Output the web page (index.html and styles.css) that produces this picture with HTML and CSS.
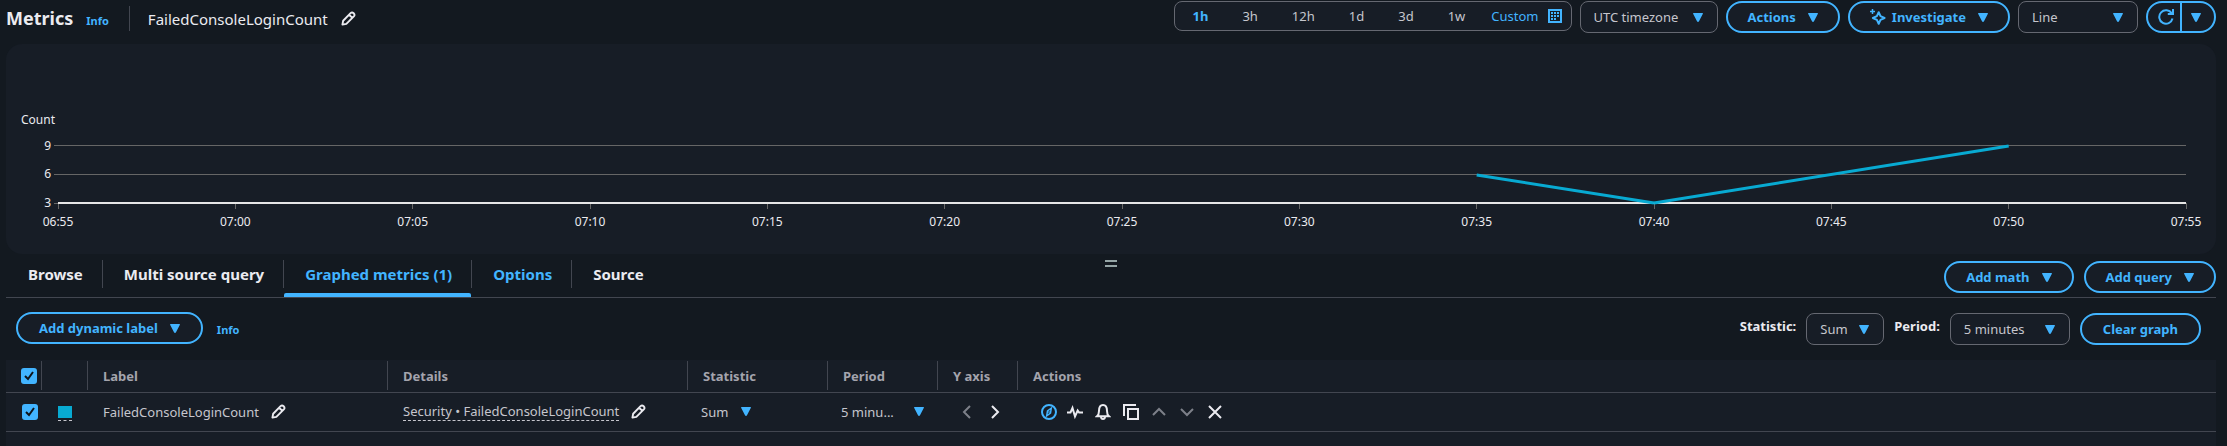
FILE: index.html
```html
<!DOCTYPE html>
<html lang="en">
<head>
<meta charset="utf-8">
<title>Metrics</title>
<link rel="stylesheet" href="styles.css">
</head>
<body>
<svg class="defs" aria-hidden="true">
  <symbol id="caret" viewBox="0 0 10 9"><path d="M.6 0h8.8c.5 0 .7.4.5.8L6 8.300c-.4.8-1.600.8-2 0L.1.8C-.1.4.1 0 .6 0Z" fill="currentColor"/></symbol>
  <symbol id="pencil" viewBox="0 0 16 16"><path d="M1.500 14.500 2.300 10.400 10.200 2.300Q11.800.8 13.500 2.400Q15.200 4.100 13.700 5.800L5.700 13.700Z M8.700 4 12.100 7.300" fill="none" stroke="currentColor" stroke-width="2" stroke-linejoin="round"/></symbol>
</svg>

<header class="topbar">
  <h1>Metrics</h1>
  <a class="info" href="#">Info</a>
  <div class="graph-name">
    <span>FailedConsoleLoginCount</span>
    <button class="icon-btn" aria-label="Edit name"><svg class="pencil"><use href="#pencil"/></svg></button>
  </div>
  <div class="toolbar">
    <div class="range" role="group" aria-label="Time range">
      <button class="active">1h</button><button>3h</button><button>12h</button><button>1d</button><button>3d</button><button>1w</button>
      <button class="custom">Custom
        <svg width="14" height="14" viewBox="0 0 14 14"><path d="M1 1h12v12H1z" fill="none" stroke="currentColor" stroke-width="2"/><path d="M3 4h2M6 4h2M9 4h2M3 7h2M6 7h2M9 7h2M3 10h2M6 10h2" stroke="currentColor" stroke-width="2"/></svg>
      </button>
    </div>
    <div class="select tz"><select aria-label="Timezone"><option>UTC timezone</option></select><svg class="caret"><use href="#caret"/></svg></div>
    <button class="btn">Actions <svg class="caret"><use href="#caret"/></svg></button>
    <button class="btn"><svg class="spark" viewBox="0 0 16 16" fill="none" stroke="currentColor"><path d="M8.700 3.200 10.500 7.200 14.500 9 10.500 10.800 8.700 14.800 6.900 10.800 2.900 9 6.900 7.200Z" stroke-width="2" stroke-linejoin="round"/><path d="M2.500 0v5M0 2.500h5" stroke-width="1.500"/></svg><span>Investigate</span> <svg class="caret"><use href="#caret"/></svg></button>
    <div class="select graph-type"><select aria-label="Graph type"><option>Line</option></select><svg class="caret"><use href="#caret"/></svg></div>
    <div class="split">
      <button aria-label="Refresh"><svg width="16" height="16" viewBox="0 0 16 16" fill="none" stroke="currentColor" stroke-width="2"><path d="M14.500 9.500A6.700 6.700 0 1 1 13.700 4.500"/><path d="M15 0v5H9.800"/></svg></button>
      <button aria-label="Refresh options"><svg class="caret"><use href="#caret"/></svg></button>
    </div>
  </div>
</header>

<main>
  <section class="chart-panel" aria-label="Graph">
    <p class="unit">Count</p>
    <svg class="chart" role="img" aria-label="Line graph of FailedConsoleLoginCount">
      <g class="grid">
        <path d="M-4 62.500H0"/>
        <line x1="-4" x2="100%" y1="4.500" y2="4.500"/>
        <line x1="-4" x2="100%" y1="33.500" y2="33.500"/>
        <line x1="0" x2="0" y1="62" y2="68"/><line x1="8.333%" x2="8.333%" y1="62" y2="68"/><line x1="16.667%" x2="16.667%" y1="62" y2="68"/><line x1="25%" x2="25%" y1="62" y2="68"/><line x1="33.333%" x2="33.333%" y1="62" y2="68"/><line x1="41.667%" x2="41.667%" y1="62" y2="68"/><line x1="50%" x2="50%" y1="62" y2="68"/><line x1="58.333%" x2="58.333%" y1="62" y2="68"/><line x1="66.667%" x2="66.667%" y1="62" y2="68"/><line x1="75%" x2="75%" y1="62" y2="68"/><line x1="83.333%" x2="83.333%" y1="62" y2="68"/><line x1="91.667%" x2="91.667%" y1="62" y2="68"/><line x1="100%" x2="100%" y1="62" y2="68"/>
      </g>
      <line class="axis" x1="0" x2="100%" y1="62" y2="62"/>
      <g class="y-labels"><text x="-7" y="9">9</text><text x="-7" y="37">6</text><text x="-7" y="66">3</text></g>
      <g class="x-labels">
        <text x="0" y="85">06:55</text><text x="8.333%" y="85">07:00</text><text x="16.667%" y="85">07:05</text><text x="25%" y="85">07:10</text><text x="33.333%" y="85">07:15</text><text x="41.667%" y="85">07:20</text><text x="50%" y="85">07:25</text><text x="58.333%" y="85">07:30</text><text x="66.667%" y="85">07:35</text><text x="75%" y="85">07:40</text><text x="83.333%" y="85">07:45</text><text x="91.667%" y="85">07:50</text><text x="100%" y="85">07:55</text>
      </g>
      <g class="series">
        <line x1="66.667%" y1="34" x2="75%" y2="62"/>
        <line x1="75%" y1="62" x2="91.667%" y2="5"/>
      </g>
    </svg>
  </section>

  <div class="tabbar">
    <nav class="tabs">
      <a href="#">Browse</a><a href="#">Multi source query</a><a href="#" class="current">Graphed metrics (1)</a><a href="#" class="accent">Options</a><a href="#">Source</a>
    </nav>
    <button class="handle" aria-label="Resize panels"></button>
    <div class="tab-actions">
      <button class="btn">Add math <svg class="caret"><use href="#caret"/></svg></button>
      <button class="btn">Add query <svg class="caret"><use href="#caret"/></svg></button>
    </div>
  </div>

  <div class="controls">
    <button class="btn">Add dynamic label <svg class="caret"><use href="#caret"/></svg></button>
    <a class="info" href="#">Info</a>
    <div class="filters">
      <label for="stat">Statistic:</label>
      <div class="select stat"><select id="stat"><option>Sum</option></select><svg class="caret"><use href="#caret"/></svg></div>
      <label for="period">Period:</label>
      <div class="select period"><select id="period"><option>5 minutes</option></select><svg class="caret"><use href="#caret"/></svg></div>
      <button class="btn">Clear graph</button>
    </div>
  </div>

  <div class="table-wrap">
  <table>
    <colgroup><col class="c-check"><col class="c-color"><col class="c-label"><col class="c-details"><col class="c-stat"><col class="c-period"><col class="c-axis"><col></colgroup>
    <thead>
      <tr><th><input type="checkbox" checked aria-label="Select all metrics"></th><th></th><th>Label</th><th>Details</th><th>Statistic</th><th>Period</th><th>Y axis</th><th>Actions</th></tr>
    </thead>
    <tbody>
      <tr>
        <td class="check"><input type="checkbox" checked aria-label="Select FailedConsoleLoginCount"></td>
        <td class="color"><button class="swatch" aria-label="Line color"></button></td>
        <td><div class="cell">FailedConsoleLoginCount <button class="icon-btn" aria-label="Edit label"><svg class="pencil"><use href="#pencil"/></svg></button></div></td>
        <td><div class="cell"><span class="details">Security • FailedConsoleLoginCount</span> <button class="icon-btn" aria-label="Edit details"><svg class="pencil"><use href="#pencil"/></svg></button></div></td>
        <td class="pick"><div class="select plain row-stat"><select aria-label="Statistic"><option>Sum</option></select><svg class="caret"><use href="#caret"/></svg></div></td>
        <td class="pick"><div class="select plain row-period"><select aria-label="Period"><option>5 minu...</option></select><svg class="caret"><use href="#caret"/></svg></div></td>
        <td><div class="cell axis-btns">
          <button class="icon-btn dim" aria-label="Left Y axis"><svg viewBox="0 0 16 16"><path d="M11 2 5 8l6 6"/></svg></button>
          <button class="icon-btn" aria-label="Right Y axis"><svg viewBox="0 0 16 16"><path d="m5 2 6 6-6 6"/></svg></button>
        </div></td>
        <td><div class="cell row-actions">
          <button class="icon-btn blue" aria-label="Explore"><svg viewBox="0 0 16 16"><circle cx="8" cy="8" r="7"/><path d="M10.300 4.200 9.500 9 5.700 11.800 6.500 7Z" stroke-width="1.500"/><circle cx="8" cy="8" r=".5" stroke-width="1"/></svg></button>
          <button class="icon-btn pulse" aria-label="Anomaly detection"><svg viewBox="0 0 16 16"><path d="M0 8.500h3.500l2-4.500 2.500 8.500 2.700-6 1.400 2H16"/></svg></button>
          <button class="icon-btn" aria-label="Create alarm"><svg viewBox="0 0 16 16"><path d="M2 12.300c1.500-1.300 2-2.800 2-5.300 0-3.700 1.300-6 4-6s4 2.300 4 6c0 2.500.5 4 2 5.300ZM6 13c.2 2.600 3.800 2.600 4 0"/></svg></button>
          <button class="icon-btn" aria-label="Duplicate"><svg viewBox="0 0 16 16"><path d="M1 12V1h12M5 5h10v10H5z"/></svg></button>
          <button class="icon-btn dim" aria-label="Move up"><svg viewBox="0 0 16 16"><path d="m2 11 6-6 6 6"/></svg></button>
          <button class="icon-btn dim" aria-label="Move down"><svg viewBox="0 0 16 16"><path d="m2 5 6 6 6-6"/></svg></button>
          <button class="icon-btn" aria-label="Remove"><svg viewBox="0 0 16 16"><path d="m2 2 12 12M14 2 2 14"/></svg></button>
        </div></td>
      </tr>
    </tbody>
  </table>
  </div>
</main>
</body>
</html>
```
FILE: styles.css
```css
:root {
  --bg: #131920;
  --panel: #171d26;
  --line: #424650;
  --border: #656871;
  --blue: #42b4ff;
  --text: #c6c6cd;
  --bright: #ebebf0;
}
* { box-sizing: border-box; }
html, body { min-height: 100%; }
html { background: var(--bg); }
body {
  display: flex;
  flex-direction: column;
  min-height: 100vh;
  margin: 0;
  padding: 0 11px 0 6px;
  background: var(--bg);
  color: var(--text);
  font: 13px/20px "Noto Sans", "Open Sans", sans-serif;
}
main { display: flex; flex: 1; flex-direction: column; }
.defs { position: absolute; width: 0; height: 0; }
button, select { font: inherit; color: inherit; }
button { background: none; border: 0; padding: 0; }
a { color: var(--blue); text-decoration: none; }

.topbar { display: flex; align-items: flex-start; height: 44px; padding-top: 1px; }
.topbar h1 { margin: 0 13px 0 0; color: var(--bright); font-size: 18px; line-height: 34px; }
.info { font-size: 11px; font-weight: 700; }
.topbar .info { line-height: 40px; }
.graph-name {
  display: flex;
  align-items: center;
  gap: 13px;
  height: 25px;
  margin: 5px 0 0 20px;
  padding-left: 18px;
  border-left: 1px solid var(--line);
  color: var(--bright);
  font-size: 15px;
}
.icon-btn { display: flex; color: var(--bright); }
.icon-btn svg { width: 16px; height: 16px; fill: none; stroke: currentColor; stroke-width: 2; }
.icon-btn .pencil { width: 15px; height: 15px; stroke: none; }
.caret { flex: none; width: 10px; height: 9px; color: var(--blue); }

.toolbar { display: flex; gap: 8px; margin-left: auto; }
.range {
  display: flex;
  height: 30px;
  border: 1px solid var(--border);
  border-radius: 8px;
  background: var(--panel);
}
.range button { padding: 0 17px; }
.range .active { color: var(--blue); font-weight: 700; }
.range .custom { display: flex; align-items: center; gap: 9px; padding: 0 9px; color: var(--blue); }

.btn {
  display: flex;
  align-items: center;
  gap: 12px;
  height: 32px;
  padding: 0 20px;
  border: 2px solid var(--blue);
  border-radius: 16px;
  background: var(--panel);
  color: var(--blue);
  font-weight: 700;
  white-space: nowrap;
}
.spark { width: 16px; height: 16px; }
.btn .spark + span { margin-left: -6px; }
.controls .btn { padding: 0 21px; }

.select { display: grid; align-items: center; }
.select > * { grid-area: 1 / 1; }
.select .caret { justify-self: end; margin-right: 15px; pointer-events: none; }
select {
  appearance: none;
  width: 100%;
  height: 32px;
  padding: 0 28px 0 13px;
  border: 1px solid var(--border);
  border-radius: 8px;
  background: var(--panel);
}
.tz { width: 138px; }
.graph-type { width: 120px; }
.stat { width: 78px; }
.period { width: 120px; }

.split { display: flex; width: 70px; height: 32px; border: 2px solid var(--blue); border-radius: 16px; background: var(--panel); color: var(--blue); }
.split button { display: flex; flex: 1; align-items: center; justify-content: center; }
.split button + button { border-left: 2px solid var(--blue); padding-right: 4px; }
.split button:first-child { padding-left: 4px; }

.chart-panel { height: 210px; padding: 66px 30px 0 15px; border-radius: 16px; background: var(--panel); }
.unit { margin: 0 0 11px; color: var(--bright); font-size: 12px; line-height: 20px; }
.chart { display: block; width: calc(100% - 37px); height: 90px; margin-left: 37px; overflow: visible; }
.chart text { fill: var(--bright); font-size: 12px; }
.y-labels { text-anchor: end; }
.x-labels { text-anchor: middle; }
.grid { stroke: #666; stroke-width: 1; shape-rendering: crispEdges; }
.axis { stroke: #e6e6e6; stroke-width: 2; }
.series { stroke: #08aad2; stroke-width: 3; }

.tabbar { display: grid; grid-template-columns: 1fr auto 1fr; height: 44px; border-bottom: 1px solid var(--line); }
.tabs { display: flex; font-size: 15px; font-weight: 700; white-space: nowrap; }
.tabs a { position: relative; padding: 0 19px 0 22px; color: var(--bright); line-height: 40px; }
.tabs a + a::before { content: ""; position: absolute; left: 0; top: 6px; height: 28px; border-left: 1px solid var(--line); }
.tabs .current, .tabs .accent { color: var(--blue); }
.tabs .current::after { content: ""; position: absolute; left: 1px; right: 0; bottom: 0; height: 4px; border-radius: 2px 2px 0 0; background: var(--blue); }
.handle { width: 12px; height: 7px; margin-top: 6px; border: solid #95a5a6; border-width: 2px 0; }
.tab-actions { display: flex; justify-content: flex-end; gap: 10px; padding-top: 7px; }

.controls { display: flex; align-items: flex-start; height: 62px; padding: 14px 15px 0 10px; }
.controls .info { margin-left: 14px; line-height: 36px; }
.filters { display: flex; gap: 10px; margin: 1px 0 0 auto; color: var(--bright); }
.filters label { font-weight: 700; line-height: 26px; }
.filters select { color: var(--text); }

.table-wrap { flex: 1; background: var(--panel); }
table { width: 100%; border-collapse: collapse; table-layout: fixed; }
.c-check { width: 35px; }
.c-color { width: 46px; }
.c-label { width: 300px; }
.c-details { width: 300px; }
.c-stat { width: 140px; }
.c-period { width: 110px; }
.c-axis { width: 80px; }
th, td { padding: 0 0 0 16px; text-align: left; border-bottom: 1px solid var(--line); }
th { position: relative; height: 32px; color: #a4a4ad; }
th:first-child { padding-left: 15px; }
th + th::before { content: ""; position: absolute; left: 0; top: 1px; bottom: 2px; border-left: 1px solid var(--line); }
td { height: 39px; }
td.color { padding-left: 17px; }
input[type="checkbox"] {
  appearance: none;
  display: block;
  width: 16px;
  height: 16px;
  margin: 0;
  border-radius: 3px;
  background: var(--blue) url("data:image/svg+xml,%3Csvg xmlns='http://www.w3.org/2000/svg' viewBox='0 0 16 16'%3E%3Cpath d='m4 8 3 3 5-7' fill='none' stroke='%230f141a' stroke-width='2'/%3E%3C/svg%3E");
}
.swatch { display: block; width: 14px; height: 15px; margin-top: 4px; padding-bottom: 2px; border-bottom: 1px dashed var(--text); background: #08aad2 content-box; }
.cell { display: flex; align-items: center; gap: 12px; white-space: nowrap; }
.details { border-bottom: 1px dashed var(--text); line-height: 18px; }
.plain select { height: 30px; padding: 0; border: 0; background: none; }
.plain .caret { margin: 0; }
td.pick { padding-left: 14px; }
.row-stat { width: 50px; }
.row-period { width: 83px; }
.axis-btns { padding-left: 6px; }
.row-actions { padding-left: 8px; }
.row-actions .pulse { margin-left: -2px; }
.icon-btn.dim { color: #7d8089; }
.icon-btn.blue { color: var(--blue); }
```
